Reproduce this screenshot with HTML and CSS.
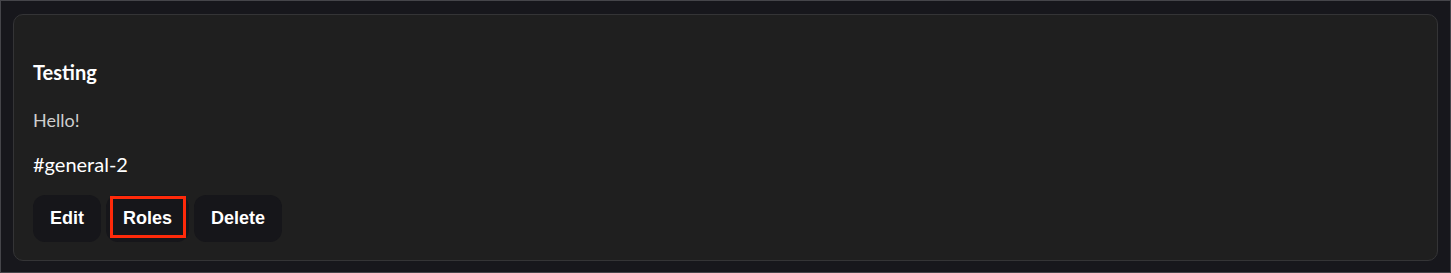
FILE: index.html
```html
<!DOCTYPE html>
<html lang="en">
<head>
  <meta charset="UTF-8">
  <meta name="viewport" content="width=device-width, initial-scale=1.0">
  <title>Announcement</title>
  <link rel="stylesheet" href="styles.css">
</head>
<body>

  <div class="frame">
    <div class="card">
      <h3 class="card-title">Testing</h3>
      <p class="card-message">Hello!</p>
      <div class="card-channel">#general-2</div>

      <div class="actions">
        <button class="action-button">Edit</button>
        <button class="action-button highlighted">Roles</button>
        <button class="action-button">Delete</button>
      </div>
    </div>
  </div>

</body>
</html>
```

FILE: styles.css
```css
html, body {
  margin: 0;
  height: 100%;
}

body {
  background: #17171c;
  font-family: 'Lato', 'Noto Sans', sans-serif;
  color: #fff;
}

.frame {
  box-sizing: border-box;
  height: 100%;
  border: 1px solid #45454a;
  padding: 13px 12px 12px 12px;
}

.card {
  background: #1f1f1f;
  border: 1px solid #343436;
  border-radius: 10px;
  padding: 45px 19px 18px 19px;
}

.card-title {
  margin: 0;
  font-size: 20px;
  line-height: 24px;
  font-weight: bold;
}

.card-message {
  margin: 26px 0 0 0;
  font-size: 18px;
  line-height: 20px;
  color: #cfcfcf;
}

.card-channel {
  margin-top: 23px;
  font-size: 20px;
  line-height: 22px;
}

.actions {
  display: flex;
  gap: 5px;
  margin-top: 20px;
}

.action-button {
  position: relative;
  height: 47px;
  padding: 0 17px;
  font-family: 'Liberation Sans', Arial, sans-serif;
  font-size: 18px;
  font-weight: bold;
  color: #fff;
  background: #16161a;
  border: none;
  border-radius: 12px;
  cursor: pointer;
}

.highlighted::after {
  content: "";
  position: absolute;
  top: 1px;
  left: 4px;
  right: 3px;
  bottom: 4px;
  border: 3px solid #ff2a0a;
  pointer-events: none;
}
```
